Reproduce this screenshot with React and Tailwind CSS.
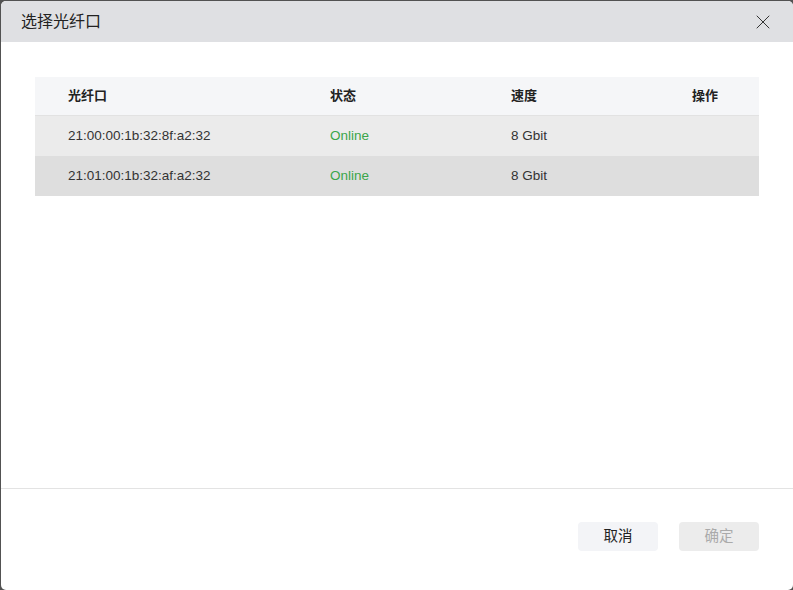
import { X } from 'lucide-react';

const ports = [
  { wwn: '21:00:00:1b:32:8f:a2:32', status: 'Online', speed: '8 Gbit', bg: 'bg-[#ebebeb]' },
  { wwn: '21:01:00:1b:32:af:a2:32', status: 'Online', speed: '8 Gbit', bg: 'bg-[#dedede]' },
];

export default function App() {
  return (
    <div
      className="h-[590px] w-[793px] bg-[#525252] pl-px pt-px overflow-hidden"
      style={{ fontFamily: '"Liberation Sans", "Noto Sans CJK SC", sans-serif' }}
    >
      <div className="flex h-full flex-col overflow-hidden rounded-[5px] bg-white">
        <header className="flex h-[41px] shrink-0 items-center justify-between bg-[#dfe0e3] pl-5 pr-[18px]">
          <h1 className="text-[16px] text-[#222]">选择光纤口</h1>
          <X size={24} strokeWidth={1} className="text-[#333]" />
        </header>

        <main className="flex-1 px-[34px] pt-[35px]">
          <div className="w-[724px] text-[13.5px]">
            <div className="grid h-[39px] grid-cols-[262px_181px_181px_1fr] items-center border-b border-[#e2e2e2] bg-[#f5f6f8] pl-[33px] text-[13px] font-bold text-[#222]">
              <span>光纤口</span>
              <span>状态</span>
              <span>速度</span>
              <span>操作</span>
            </div>
            {ports.map((p) => (
              <div
                key={p.wwn}
                className={`grid h-[40px] grid-cols-[262px_181px_181px_1fr] items-center pl-[33px] text-[#333] ${p.bg}`}
              >
                <span>{p.wwn}</span>
                <span className="text-[#3aa64a]">{p.status}</span>
                <span>{p.speed}</span>
                <span></span>
              </div>
            ))}
          </div>
        </main>

        <footer className="flex h-[102px] shrink-0 items-start justify-end gap-[21px] border-t border-[#e3e3e3] pr-[34px] pt-[33px]">
          <button className="h-[29px] w-[80px] rounded-[4px] bg-[#f3f4f7] text-[14.5px] text-[#222]">
            取消
          </button>
          <button className="h-[29px] w-[80px] rounded-[4px] bg-[#ececec] text-[14.5px] text-[#aaa]">
            确定
          </button>
        </footer>
      </div>
    </div>
  );
}
